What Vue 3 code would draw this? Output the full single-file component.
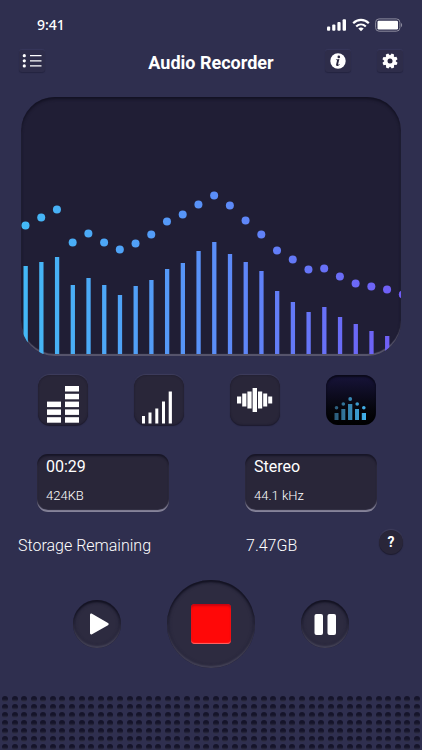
<script setup>

import { ref, computed } from 'vue'

const dotLevels = [128, 120, 112, 145, 136, 145, 152, 146, 137, 124, 117, 107, 98, 108, 123, 137, 153, 162, 172, 171, 179, 186, 189, 192, 197]
const barLevels = [169, 165, 160, 188, 181, 188, 198, 189, 183, 172, 166, 154, 145, 157, 165, 174, 194, 205, 215, 210, 220, 227, 234, 239]
const step = 15.72

const dots = computed(() => dotLevels.map((y, i) => ({ x: 4.5 + i * step, y: y + 0.4 })))
const bars = computed(() => barLevels.map((y, i) => ({ x: 2.5 + i * step, y, h: 257 - y })))

const visual = ref('dots')
const state = ref('recording')

const elapsed = ref('00:29')
const fileSize = ref('424KB')
const channels = ref('Stereo')
const sampleRate = ref('44.1 kHz')
const storage = ref('7.47GB')

</script>

<template>
  <div class="recorder">

    <div class="status-bar">
      <span class="time">9:41</span>
      <div class="status-icons">
        <svg width="20" height="14" viewBox="0 0 20 14" fill="#fff">
          <rect x="0" y="8.5" width="3.2" height="4.2" rx="1" />
          <rect x="5.2" y="6.5" width="3.2" height="6.2" rx="1" />
          <rect x="10.4" y="4" width="3.2" height="8.7" rx="1" />
          <rect x="15.6" y="1.2" width="3.4" height="11.5" rx="1" />
        </svg>
        <svg width="18" height="14" viewBox="0 0 18 14" fill="none" stroke="#fff" stroke-width="2.2">
          <path d="M1.2 5.2C5.6 .8 12.4 .8 16.8 5.2" />
          <path d="M4.2 8.5C7 5.8 11 5.8 13.8 8.5" />
          <path d="M6.3 10.6C7.9 9.2 10.1 9.2 11.7 10.6L9 13.2Z" fill="#fff" stroke="none" />
        </svg>
        <svg width="28" height="14" viewBox="0 0 28 14">
          <rect x=".6" y=".9" width="24.3" height="12.3" rx="3.5" fill="none" stroke="#8d8c9e" />
          <rect x="2.5" y="2.7" width="20.5" height="8.7" rx="1.2" fill="#fff" />
          <path d="M26 5v4.2c1.5-.6 1.5-3.6 0-4.2z" fill="#8d8c9e" />
        </svg>
      </div>
    </div>

    <header class="header">
      <button class="icon-button" aria-label="Recordings">
        <svg width="20" height="16" viewBox="0 0 20 16" fill="#fff">
          <circle cx="2.3" cy="2.7" r="1.6" />
          <circle cx="2.3" cy="7.8" r="1.6" />
          <circle cx="2.3" cy="12.9" r="1.6" />
          <path d="M8 2.1h11.500v1.2h-11.500zM8 7.200h11.500v1.2h-11.500zM8 12.300h11.500v1.2h-11.500z" />
        </svg>
      </button>
      <h1>Audio Recorder</h1>
      <div class="header-actions">
        <button class="icon-button" aria-label="Information">
          <svg width="16" height="16" viewBox="0 0 16 16">
            <circle cx="8" cy="8" r="7.7" fill="#fff" />
            <circle cx="8.8" cy="3.9" r="1.3" fill="#29273f" />
            <path d="M6 6.5l3.4-.4-1.3 5.2c-.1.5.4.5 1.3-.3l.3.4c-1.9 2.1-4 1.9-3.6.1l.9-3.800c.1-.5-.2-.7-1.1-.7z" fill="#29273f" />
          </svg>
        </button>
        <button class="icon-button" aria-label="Settings">
          <svg width="16" height="16" viewBox="0 0 16 16">
            <g fill="#fff">
              <circle cx="8" cy="8" r="5.900" />
              <path v-for="n in 8" :key="n" d="M6 3L6.700.4h2.600L10 3z" :transform="`rotate(${n * 45 + 22} 8 8)`" />
            </g>
            <circle cx="8" cy="8" r="2.5" fill="#29273f" />
          </svg>
        </button>
      </div>
    </header>

    <section class="screen">
      <svg class="chart" viewBox="0 0 380 259" role="img" aria-label="Sound level">
        <defs>
          <linearGradient id="level" gradientUnits="userSpaceOnUse" x1="0" y1="0" x2="380" y2="0">
            <stop offset="0" stop-color="#43b9f6" />
            <stop offset=".5" stop-color="#5a8ff8" />
            <stop offset="1" stop-color="#715cf6" />
          </linearGradient>
        </defs>
        <g fill="url(#level)">
          <circle v-for="(dot, i) in dots" :key="'dot' + i" :cx="dot.x" :cy="dot.y" r="4" />
          <rect v-for="(bar, i) in bars" :key="'bar' + i" :x="bar.x" :y="bar.y" width="4.3" :height="bar.h" />
        </g>
      </svg>
    </section>

    <div class="visuals">
      <button class="tile" aria-label="Equalizer" @click="visual = 'blocks'">
        <svg width="50" height="50" viewBox="0 0 50 50" fill="#fff">
          <rect v-for="n in 3" :key="'l' + n" x="9" :y="50 - n * 7.8" width="14" height="5.5" />
          <rect v-for="n in 5" :key="'r' + n" x="27" :y="50 - n * 7.8" width="14" height="5.5" />
        </svg>
      </button>
      <button class="tile" aria-label="Level" @click="visual = 'level'">
        <svg width="50" height="50" viewBox="0 0 50 50" fill="#fff">
          <path d="M8 41h3v7.500h-3zM14.500 37.500h3v11h-3zM21.300 33.500h3v15h-3zM28 26.500h3v22h-3zM34.700 16.500h3.200v32h-3.200z" />
        </svg>
      </button>
      <button class="tile" aria-label="Waveform" @click="visual = 'wave'">
        <svg width="50" height="50" viewBox="0 0 50 50" fill="#fff">
          <path d="M7 21.500h4.200v7h-4.200zM12.200 18.500h4.200v13h-4.200zM17.400 16.500h4.200v17h-4.200zM22.600 13h4.400v24h-4.400zM28 16.500h4.200v17h-4.200zM33.200 18.500h4v13h-4zM38.200 21.500h4v7h-4z" />
        </svg>
      </button>
      <button class="tile active" aria-label="Bars with peaks" @click="visual = 'dots'">
        <svg width="50" height="50" viewBox="0 0 50 50">
          <defs>
            <linearGradient id="peaks" gradientUnits="userSpaceOnUse" x1="8" y1="0" x2="42" y2="0">
              <stop offset="0" stop-color="#2b5875" />
              <stop offset="1" stop-color="#43b9f6" />
            </linearGradient>
          </defs>
          <g fill="url(#peaks)">
            <path d="M8.500 38h4v7h-4zM15.300 34h4v11h-4zM22 29h4.300v16h-4.300zM29 34h4v11h-4zM35.800 38h4.200v7h-4.200z" />
            <circle cx="10.500" cy="32.800" r="1.800" />
            <circle cx="17.300" cy="29" r="1.800" />
            <circle cx="24.200" cy="24" r="1.900" />
            <circle cx="31.200" cy="29" r="1.800" />
            <circle cx="37.800" cy="32.800" r="1.800" />
          </g>
        </svg>
      </button>
    </div>

    <div class="details">
      <div class="detail">
        <strong>{{ elapsed }}</strong>
        <span>{{ fileSize }}</span>
      </div>
      <div class="detail">
        <strong>{{ channels }}</strong>
        <span>{{ sampleRate }}</span>
      </div>
    </div>

    <div class="storage">
      <span>Storage Remaining</span>
      <span>{{ storage }}</span>
      <button class="help" aria-label="Help">?</button>
    </div>

    <div class="controls">
      <button class="round" aria-label="Play" @click="state = 'playing'">
        <svg width="48" height="48" viewBox="0 0 48 48">
          <path d="M17 15v18c0 1.300 1 1.800 2 1.200l16-9c.9-.6.9-1.600 0-2.200l-16-9.200c-1-.6-2-.1-2 1.200z" fill="#fff" />
        </svg>
      </button>
      <button class="round record" aria-label="Stop" @click="state = 'stopped'">
        <span class="stop"></span>
      </button>
      <button class="round" aria-label="Pause" @click="state = 'paused'">
        <svg width="48" height="48" viewBox="0 0 48 48" fill="#fff">
          <rect x="13.5" y="14" width="8.5" height="21" rx="2" />
          <rect x="26.5" y="14" width="8.5" height="21" rx="2" />
        </svg>
      </button>
    </div>

    <div class="speaker">
      <div v-for="row in 7" :key="row" class="speaker-row">
        <i v-for="hole in 44" :key="hole"></i>
      </div>
    </div>

  </div>
</template>

<style>
body {
  margin: 0;
  background: #2f2f4f;
}
</style>

<style scoped>
.recorder {
  min-height: 100vh;
  background: #2f2f4f;
  color: #fff;
  font-family: Roboto, "Liberation Sans", sans-serif;
  overflow: hidden;
}
button {
  display: flex;
  align-items: center;
  justify-content: center;
  padding: 0;
  border: 0;
  color: #fff;
  font-family: inherit;
  cursor: pointer;
}
svg {
  display: block;
}
.status-bar {
  display: flex;
  align-items: center;
  justify-content: space-between;
  height: 20px;
  padding: 15px 19px 13px 37px;
}
.time {
  font: 500 14px/20px "Noto Sans", sans-serif;
}
.status-icons {
  display: flex;
  gap: 5px;
}
.header {
  display: grid;
  grid-template-columns: 1fr auto 1fr;
  align-items: start;
  height: 24px;
  padding: 2px 19px 0;
}
.header h1 {
  margin: 0;
  font-size: 18px;
  line-height: 26px;
  font-weight: 700;
}
.header-actions {
  display: flex;
  justify-content: flex-end;
  gap: 26px;
}
.icon-button {
  width: 26px;
  height: 22px;
  border-radius: 3px;
  background: #2e2d4a;
  box-shadow: 0 1px 1px #242440, 0 -1px 1px #37375a;
}
.screen {
  margin: 23px 21px 0;
  border-radius: 34px;
  background: #201e35;
  box-shadow: inset 0 2px 3px #121122, inset 0 -2px 1px #5b5970;
  overflow: hidden;
}
.chart {
  width: 100%;
}
.visuals {
  display: flex;
  justify-content: space-between;
  padding: 19px 46px 0 38px;
}
.tile {
  width: 50px;
  height: 50px;
  border-radius: 12px;
  background: #292639;
  box-shadow: inset 0 0 2px #1b192b, 0 1px 1px #1d1b2e, 0 -1px 1px #3f3e5c;
}
.tile.active {
  background: linear-gradient(#17143a, #05050b 70%, #000);
  box-shadow: inset 0 2px 2px #0a0919;
}
.details {
  display: grid;
  grid-template-columns: 132px 132px;
  justify-content: space-between;
  padding: 29px 45px 0 37px;
}
.detail {
  display: flex;
  flex-direction: column;
  gap: 10px;
  height: 54px;
  padding: 4px 9px 0;
  border-radius: 11px;
  background: #292639;
  box-shadow: inset 0 2px 2px #171526, inset 0 -2px 1px #85839a;
}
.detail strong {
  font-size: 16px;
  line-height: 18px;
  font-weight: 400;
}
.detail span {
  font-size: 13px;
  line-height: 20px;
  font-weight: 300;
}
.storage {
  display: grid;
  grid-template-columns: 228px 1fr auto;
  align-items: start;
  padding: 18px 19px 0 18px;
  font-size: 16px;
  line-height: 32px;
  font-weight: 300;
}
.help {
  width: 24px;
  height: 24px;
  border-radius: 50%;
  background: #292639;
  box-shadow: 0 1px 1px #1d1b2e, 0 -1px 1px #3f3e5c;
  font-size: 14px;
  font-weight: 700;
}
.controls {
  display: flex;
  align-items: center;
  justify-content: center;
  gap: 46px;
  padding-top: 18px;
}
.round {
  width: 48px;
  height: 48px;
  border-radius: 50%;
  background: #2d2b40;
  box-shadow: inset 0 2px 2px #131222, inset 0 -2px 2px #444257, inset 0 0 3px 2px #242337;
}
.record {
  width: 88px;
  height: 88px;
}
.stop {
  width: 40px;
  height: 40px;
  border-radius: 4px;
  background: #ff0808;
  box-shadow: inset 0 2px 2px #c80510, inset 0 -1px 1px #ff6a6a;
}
.speaker {
  display: flex;
  flex-direction: column;
  gap: 2px;
  padding: 28px 2px 0;
}
.speaker-row {
  display: flex;
  justify-content: space-between;
}
.speaker-row i {
  width: 6px;
  height: 6px;
  border-radius: 50%;
  background: linear-gradient(#15142a 50%, #33334a);
}
</style>
